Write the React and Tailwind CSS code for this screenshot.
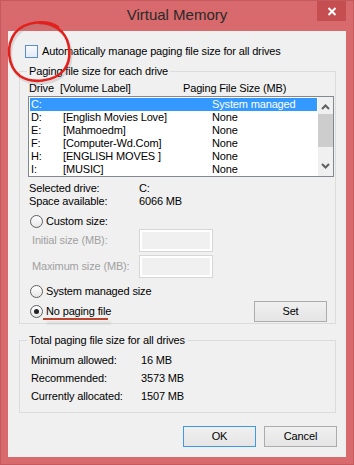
import React from "react";

const drives = [
  { letter: "C:", label: "", size: "System managed", selected: true },
  { letter: "D:", label: "[English Movies Love]", size: "None" },
  { letter: "E:", label: "[Mahmoedm]", size: "None" },
  { letter: "F:", label: "[Computer-Wd.Com]", size: "None" },
  { letter: "H:", label: "[ENGLISH MOVES ]", size: "None" },
  { letter: "I:", label: "[MUSIC]", size: "None" },
];

const totals = [
  { name: "Minimum allowed:", value: "16 MB" },
  { name: "Recommended:", value: "3573 MB" },
  { name: "Currently allocated:", value: "1507 MB" },
];

const Radio = ({ checked }) => (
  <span className="flex items-center justify-center w-[13px] h-[13px] rounded-full border border-[#5f5f5f] bg-gradient-to-b from-[#ffffff] to-[#e6e6e6]">
    {checked && <span className="w-[5px] h-[5px] rounded-full bg-[#222]" />}
  </span>
);

const TextBox = () => (
  <div className="w-[74px] h-[23px] border border-[#d6d6d6] bg-[#f0f0f0] shadow-[inset_0_0_0_2px_#ffffff]" />
);

const Button = ({ children, isDefault, className = "" }) => (
  <button
    className={
      "h-[21px] w-[73px] flex items-center justify-center text-[11px] text-black border bg-gradient-to-b from-[#f0f0f0] to-[#e5e5e5] " +
      (isDefault ? "border-[#3c9ae8]" : "border-[#acacac]") +
      " " +
      className
    }
  >
    {children}
  </button>
);

const Chevron = ({ up }) => (
  <svg width="9" height="6" viewBox="0 0 9 6">
    <polyline
      points={up ? "1,5 4.5,1.5 8,5" : "1,1 4.5,4.5 8,1"}
      fill="none"
      stroke="#606060"
      strokeWidth="2"
    />
  </svg>
);

const circlePath =
  "M58 27 C48 20, 26 20, 15 33 C6 45, 7 66, 20 76 C32 84, 54 82, 64 70 C72 60, 71 42, 62 32 C56 26, 48 23, 40 23";

const App = () => {
  return (
    <div
      className="relative w-[354px] h-[465px] bg-[#d8696c] border border-[#c45a5d] text-[11px] tracking-[-0.15px] text-black"
      style={{ fontFamily: '"Liberation Sans", Arial, sans-serif' }}
    >
      {/* title bar */}
      <div className="grid grid-cols-[1fr_auto_1fr] h-[30px]">
        <div />
        <div className="text-[15px] leading-[28px] text-[#2a2a2a] tracking-normal">
          Virtual Memory
        </div>
        <div className="flex justify-end pr-[7px]">
          <div className="w-[29px] h-[20px] bg-[#c54e50] flex items-center justify-center">
            <svg width="10" height="9" viewBox="0 0 10 9">
              <path d="M1.5 1 L8.5 8 M8.5 1 L1.5 8" stroke="#fff" strokeWidth="2" />
            </svg>
          </div>
        </div>
      </div>

      {/* client area */}
      <div className="mx-[7px] h-[426px] bg-[#f0f0f0] pl-[11px] pr-[10px] flex flex-col">
        <div className="flex items-center h-[13px] mt-[14px] ml-[6px] gap-[4px]">
          <span className="w-[13px] h-[13px] border border-[#5b8dc9] bg-gradient-to-b from-[#f7fafe] to-[#e3ebf6]" />
          <span className="leading-[13px]">Automatically manage paging file size for all drives</span>
        </div>

        <fieldset className="mt-[6px] border border-[#dcdcdc] pb-[1px]">
          <legend className="ml-[7px] px-[2px] leading-[14px]">Paging file size for each drive</legend>

          <div className="flex h-[14px] mt-[3px] pl-[9px] leading-[14px]">
            <span className="w-[31px]">Drive</span>
            <span className="w-[123px]">[Volume Label]</span>
            <span>Paging File Size (MB)</span>
          </div>

          <div className="flex mt-[1px] ml-[8px] w-[306px] h-[81px] border border-[#828790] bg-white overflow-hidden">
            <div className="w-[289px] pt-[1px] pl-[1px]">
              {drives.map((d, i) => (
                <div
                  key={i}
                  className={
                    "flex h-[13px] leading-[13px] w-[287px] pl-[1px] " +
                    (d.selected ? "bg-[#3399ff] text-white" : "")
                  }
                >
                  <span className="w-[32px]">{d.letter}</span>
                  <span className="w-[149px] whitespace-pre">{d.label}</span>
                  <span>{d.size}</span>
                </div>
              ))}
            </div>
            <div className="w-[15px] flex flex-col bg-[#f0f0f0]">
              <div className="h-[17px] flex items-center justify-center pt-[2px]">
                <Chevron up />
              </div>
              <div className="h-[33px] bg-[#cdcdcd]" />
              <div className="flex-1" />
              <div className="h-[17px] flex items-center justify-center pb-[3px]">
                <Chevron />
              </div>
            </div>
          </div>

          <div className="mt-[5px] pl-[9px]">
            <div className="flex h-[13px] leading-[13px]">
              <span className="w-[110px]">Selected drive:</span>
              <span>C:</span>
            </div>
            <div className="flex h-[13px] leading-[13px]">
              <span className="w-[110px]">Space available:</span>
              <span>6066 MB</span>
            </div>
          </div>

          <div className="flex items-center gap-[3px] h-[14px] mt-[6px] ml-[10px]">
            <Radio />
            <span>Custom size:</span>
          </div>

          <div className="flex items-center h-[23px] mt-[1px] pl-[12px] text-[#a0a0a0]">
            <span className="w-[107px]">Initial size (MB):</span>
            <TextBox />
          </div>
          <div className="flex items-center h-[23px] mt-[3px] pl-[12px] text-[#a0a0a0]">
            <span className="w-[107px]">Maximum size (MB):</span>
            <TextBox />
          </div>

          <div className="flex items-center gap-[3px] h-[14px] mt-[6px] ml-[10px]">
            <Radio />
            <span>System managed size</span>
          </div>

          <div className="flex items-center h-[22px] mt-[2px] ml-[10px]">
            <div className="relative flex items-center gap-[3px] w-[224px]">
              <Radio checked />
              <span>No paging file</span>
              <span className="absolute left-[13px] top-[15px] w-[65px] h-[2px] bg-[#b9432c]" />
              <span className="absolute left-[17px] top-[19px] w-[64px] h-[2px] bg-[#9a9a9a] opacity-30 blur-[1px]" />
            </div>
            <Button>Set</Button>
          </div>
        </fieldset>

        <fieldset className="mt-[9px] border border-[#dcdcdc] pb-[7px]">
          <legend className="ml-[7px] px-[2px] leading-[14px]">Total paging file size for all drives</legend>
          <div className="mt-[4px] pl-[11px]">
            {totals.map((t, i) => (
              <div key={i} className="flex h-[18px] leading-[18px]">
                <span className="w-[110px]">{t.name}</span>
                <span>{t.value}</span>
              </div>
            ))}
          </div>
        </fieldset>

        <div className="flex justify-end gap-[8px] mt-[13px] -mr-[1px]">
          <Button isDefault>OK</Button>
          <Button>Cancel</Button>
        </div>
      </div>

      {/* hand-drawn red circle annotation */}
      <svg
        className="absolute left-[-1px] top-[-1px] pointer-events-none"
        width="90"
        height="95"
        viewBox="0 0 90 95"
      >
        <path
          d={circlePath}
          fill="none"
          stroke="#8a8a8a"
          strokeOpacity="0.25"
          strokeWidth="3"
          transform="translate(1.5 2.5)"
        />
        <path
          d={circlePath}
          fill="none"
          stroke="#e3211c"
          strokeWidth="2.6"
          strokeLinecap="round"
        />
      </svg>
    </div>
  );
};

export default App;
